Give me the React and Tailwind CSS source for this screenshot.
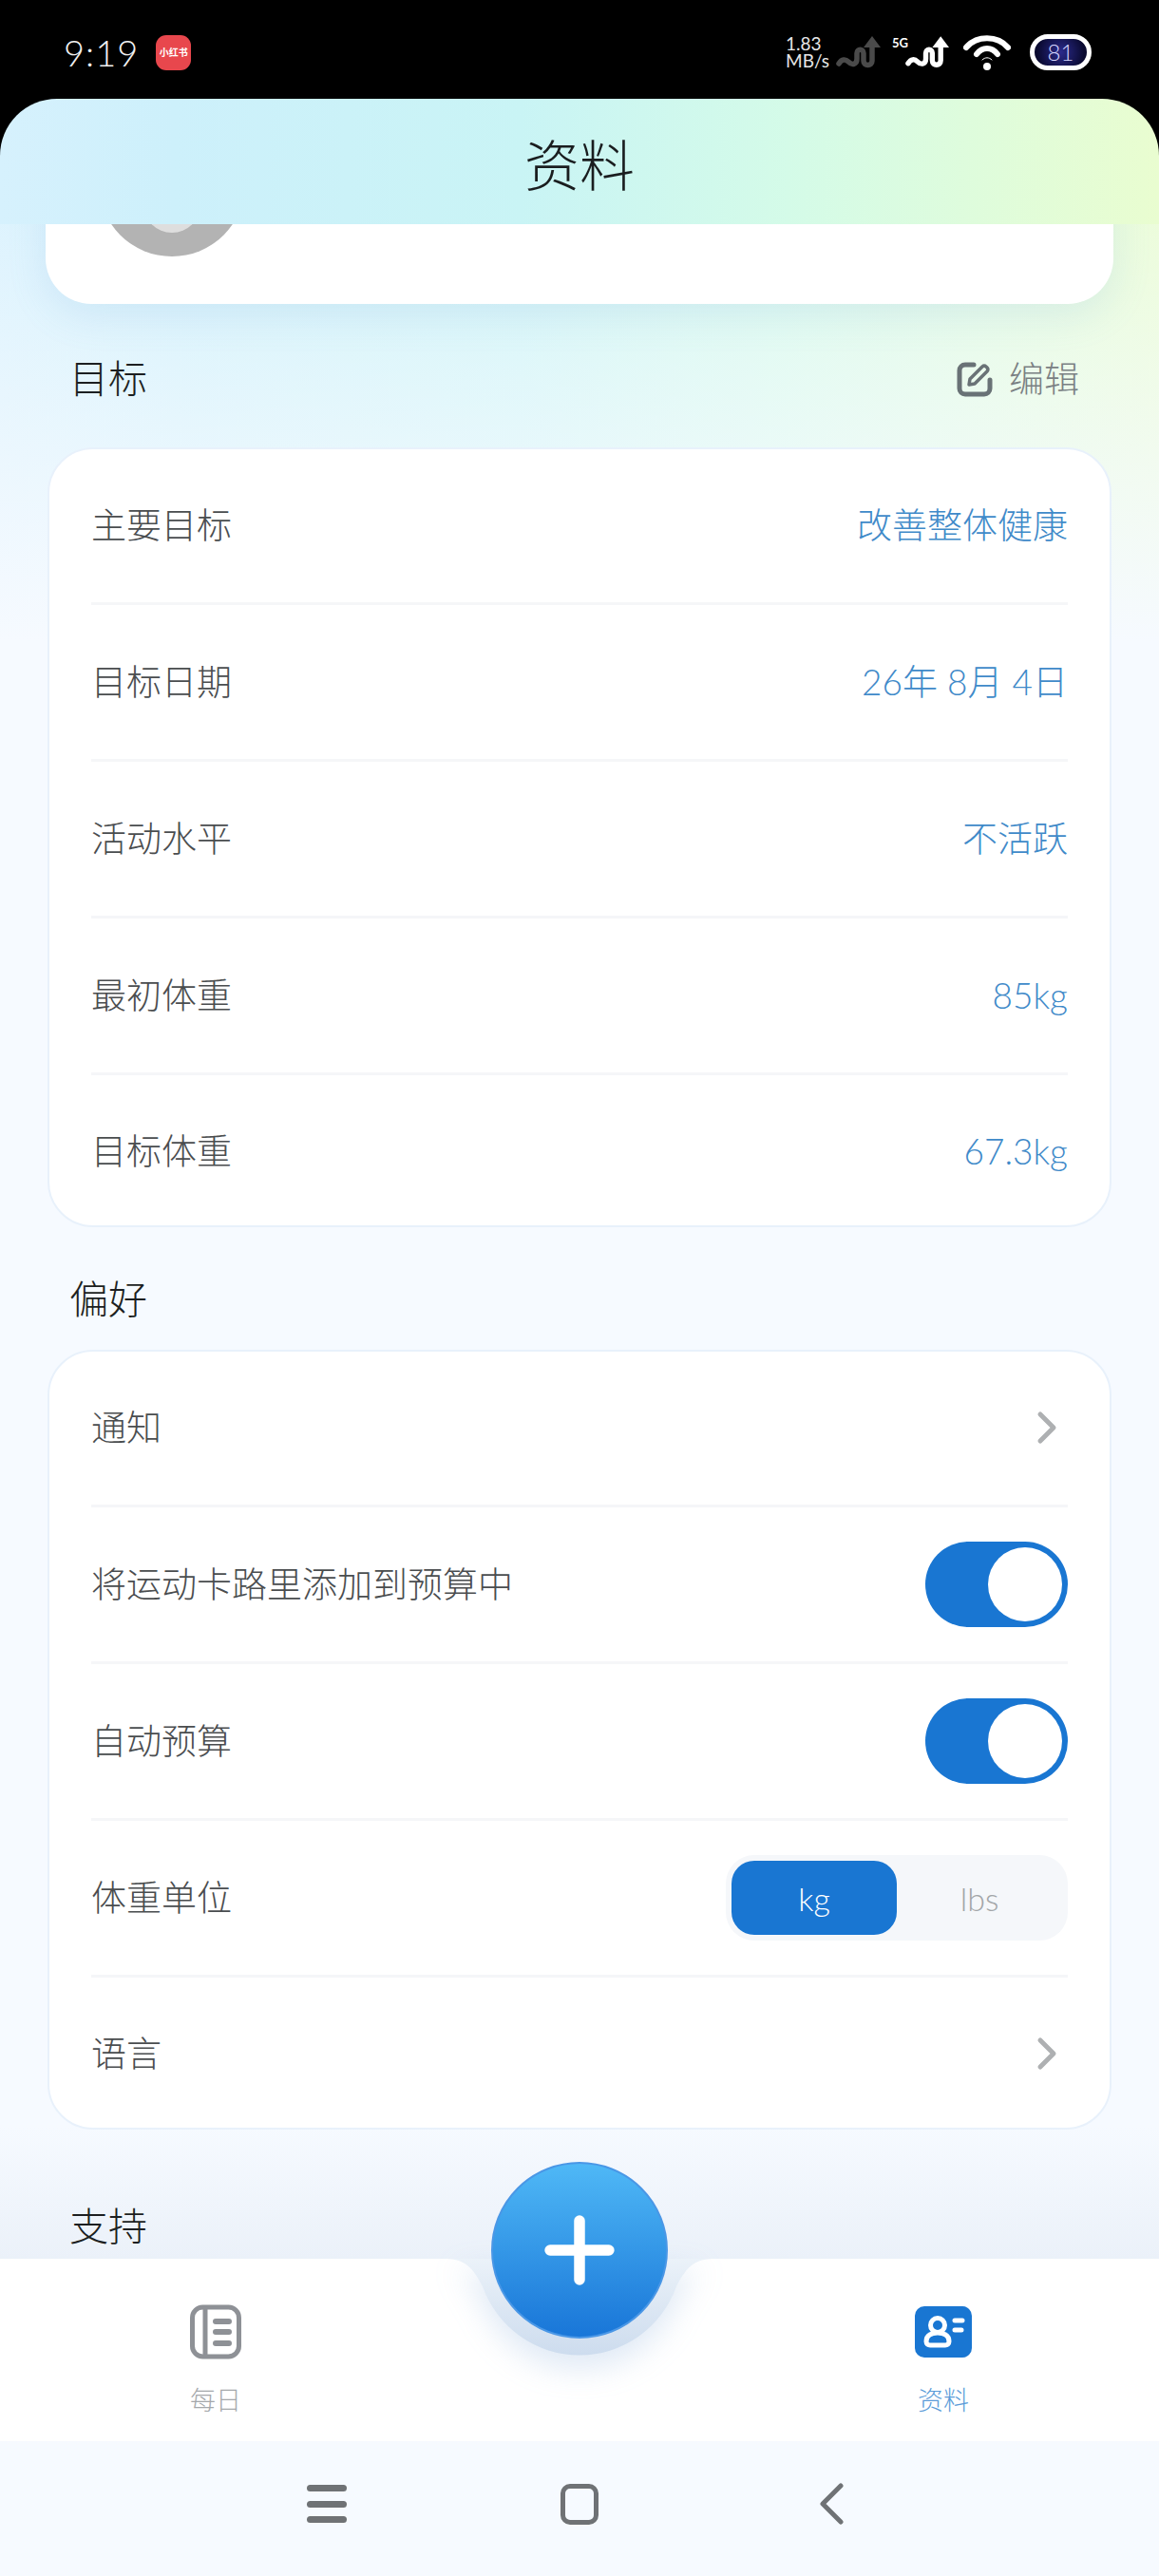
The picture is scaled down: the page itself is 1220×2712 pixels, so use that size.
import React from 'react';
import { Plus } from 'lucide-react';

const goalRows = [
  { label: '主要目标', value: '改善整体健康' },
  { label: '目标日期', value: '26年 8月 4日' },
  { label: '活动水平', value: '不活跃' },
  { label: '最初体重', value: '85kg' },
  { label: '目标体重', value: '67.3kg' },
];

const Squiggle = ({ color, className }) => (
  <svg viewBox="0 0 48 36" className={className} fill="none">
    <path
      d="M4 30c3-5 7-5 10-2 4 4 9 3 9-3v-6c0-5 7-5 7 0v8c0 6 9 6 9 0V12"
      stroke={color}
      strokeWidth="5.5"
      strokeLinecap="round"
      strokeLinejoin="round"
    />
    <path d="M39 1l9 12H30z" fill={color} />
  </svg>
);

const StatusBar = () => (
  <div className="flex h-[104px] shrink-0 items-center justify-between pl-[67px] pr-[71px] pt-[6px]">
    <div className="flex items-center gap-[18px]">
      <span className="text-[38px] font-light leading-none tracking-[1px] text-[#f0f0f0]">9:19</span>
      <div className="flex h-[37px] w-[37px] items-center justify-center rounded-[11px] bg-[#e8474d] text-[10px] font-bold text-white">
        小红书
      </div>
    </div>
    <div className="flex items-center">
      <div className="flex w-[52px] flex-col text-[19px] leading-[18px] text-[#e6e6e6]">
        <span>1.83</span>
        <span>MB/s</span>
      </div>
      <Squiggle color="#4a4a4a" className="h-[36px] w-[48px]" />
      <div className="relative ml-[12px] h-[36px] w-[60px]">
        <span className="absolute left-0 top-[2px] text-[13px] font-bold leading-none text-white">5G</span>
        <Squiggle color="#ffffff" className="absolute bottom-0 right-0 h-[36px] w-[47px]" />
      </div>
      <svg viewBox="0 0 50 38" className="ml-[15px] h-[38px] w-[50px]" fill="none">
        <path d="M3 14C14 1 36 1 47 14" stroke="#fff" strokeWidth="6" strokeLinecap="round" />
        <path d="M14 21C20 13 30 13 36 21" stroke="#fff" strokeWidth="6" strokeLinecap="round" />
        <path d="M20 27C23 24 27 24 30 27" stroke="#fff" strokeWidth="1" strokeLinecap="round" />
        <circle cx="25" cy="34" r="4" fill="#fff" />
      </svg>
      <div className="ml-[20px] flex h-[38px] w-[65px] items-center justify-center rounded-full border-[5px] border-white bg-[radial-gradient(circle,#2b2a8c_0%,#0a0a30_80%)] text-[24px] font-light leading-none text-[#d6d7ff]">
        81
      </div>
    </div>
  </div>
);

const Divider = () => <div className="mx-[44px] my-px h-[3px] bg-[#f5f6f8]" />;

const Row = ({ label, children }) => (
  <div className="flex h-[160px] items-center justify-between px-[44px] last:h-[157px]">
    <span className="text-[37px] font-light text-[#4a4d4f]">{label}</span>
    {children}
  </div>
);

const Chevron = () => (
  <svg viewBox="0 0 24 36" className="mr-[10px] h-[36px] w-[24px]" fill="none">
    <path d="M5 4l14 14L5 32" stroke="#aeb0b2" strokeWidth="5" strokeLinecap="round" strokeLinejoin="round" />
  </svg>
);

const Toggle = () => (
  <div className="flex h-[90px] w-[150px] items-center justify-end rounded-full bg-[#1976d2] pr-[6px]">
    <div className="h-[78px] w-[78px] rounded-full bg-white" />
  </div>
);

const UnitSwitch = () => (
  <div className="flex h-[90px] w-[360px] rounded-[30px] bg-[#f5f7fa] p-[6px] text-[34px] font-light">
    <div className="flex w-[174px] items-center justify-center rounded-[24px] bg-[#1976d2] text-white">kg</div>
    <div className="flex flex-1 items-center justify-center text-[#a2a5a8]">lbs</div>
  </div>
);

const Card = ({ children }) => (
  <div className="mx-[2px] rounded-[48px] border-2 border-[#e8f1fb] bg-white">{children}</div>
);

const Profile = () => (
  <div className="-mt-[136px] h-[220px] rounded-[48px] bg-white pl-[56px] pt-[16px] shadow-[0_12px_40px_rgba(110,170,215,0.16)]">
    <svg viewBox="0 0 154 154" className="h-[154px] w-[154px]">
      <circle cx="77" cy="77" r="77" fill="#b3b3b3" />
      <circle cx="77" cy="99" r="30" fill="#dedede" />
    </svg>
  </div>
);

const EditIcon = () => (
  <svg viewBox="0 0 38 38" className="h-[38px] w-[38px]" fill="none" stroke="#697276" strokeLinecap="round" strokeLinejoin="round">
    <path d="M18 4H9a6 6 0 0 0-6 6v19a6 6 0 0 0 6 6h20a6 6 0 0 0 6-6V20" strokeWidth="5" />
    <path d="M13 25l1-6L27 6a3 3 0 0 1 4 0l1 1a3 3 0 0 1 0 4L19 24z" strokeWidth="3.5" />
  </svg>
);

const DailyIcon = () => (
  <svg viewBox="0 0 54 58" className="h-[58px] w-[54px]" fill="none" stroke="#8e9196">
    <rect x="2.5" y="3" width="49" height="52" rx="11" strokeWidth="5" />
    <path d="M16 3v52" strokeWidth="5" />
    <path d="M27 18h14M27 29h14M27 41h14" strokeWidth="6" strokeLinecap="round" />
  </svg>
);

const ProfileIcon = () => (
  <svg viewBox="0 0 60 54" className="h-[54px] w-[60px]">
    <rect width="60" height="54" rx="10" fill="#1976d2" />
    <g fill="none" stroke="#fff" strokeWidth="5">
      <circle cx="24" cy="20" r="7.5" />
      <path d="M12 37c0-7 6-9 12-9s12 2 12 9c0 3-2 4-4 4H16c-2 0-4-1-4-4z" />
    </g>
    <path d="M42 15h8M42 25h7" stroke="#fff" strokeWidth="5" strokeLinecap="round" />
  </svg>
);

const NavItem = ({ icon, label, active }) => (
  <div className="flex h-[119px] w-[200px] flex-col items-center justify-between">
    <div className="flex h-[58px] items-center">{icon}</div>
    <span className={active ? 'text-[27px] font-light leading-[36px] text-[#5a9bd8]' : 'text-[27px] font-light leading-[36px] text-[#a5a8ab]'}>
      {label}
    </span>
  </div>
);

const BottomNav = () => (
  <div className="relative z-10 flex h-[192px] shrink-0 justify-between bg-white px-[127px] pt-[48px]">
    {/* notch behind the add button */}
    <svg viewBox="460 2378 300 110" className="absolute left-[460px] top-0 h-[110px] w-[300px] drop-shadow-[0_14px_16px_rgba(110,155,210,0.22)]">
      <defs>
        <linearGradient id="notch" x1="0" y1="0" x2="0" y2="1">
          <stop offset="0" stopColor="#ebf2f9" />
          <stop offset="1" stopColor="#cddcee" />
        </linearGradient>
      </defs>
      <path d="M470 2378C492 2378 500 2392 508 2407A108 108 0 0 0 712 2407C720 2392 728 2378 750 2378Z" fill="url(#notch)" />
    </svg>
    <NavItem icon={<DailyIcon />} label="每日" />
    <NavItem icon={<ProfileIcon />} label="资料" active />
    <div className="absolute left-[517px] top-[-102px] flex h-[186px] w-[186px] items-center justify-center rounded-full border-2 border-[#4a97e6] bg-[linear-gradient(to_bottom,#4fb8f6,#1976d8)]">
      <Plus size={106} color="#ffffff" strokeWidth={2.6} />
    </div>
  </div>
);

const SystemBar = () => (
  <div className="flex h-[142px] shrink-0 items-center bg-[#f6faff] pb-[10px] pl-[323px]">
    <div className="flex h-[40px] w-[42px] flex-col justify-between">
      <div className="h-[7px] rounded-full bg-[#6f7275]" />
      <div className="h-[7px] rounded-full bg-[#6f7275]" />
      <div className="h-[7px] rounded-full bg-[#6f7275]" />
    </div>
    <div className="ml-[225px] h-[43px] w-[40px] rounded-[10px] border-[5px] border-[#6f7275]" />
    <svg viewBox="0 0 26 44" className="ml-[232px] h-[44px] w-[26px]" fill="none">
      <path d="M23 3L4 22l19 19" stroke="#6f7275" strokeWidth="5" strokeLinecap="round" strokeLinejoin="round" />
    </svg>
  </div>
);

export default function App() {
  return (
    <div className="flex h-[2712px] w-[1220px] flex-col overflow-hidden bg-black font-[Lato,'Noto_Sans_CJK_SC',sans-serif]">
      <StatusBar />
      <div className="flex min-h-0 flex-1 flex-col overflow-hidden rounded-t-[60px]">
        <div className="relative z-10 flex h-[132px] shrink-0 items-center justify-center bg-[linear-gradient(to_right,#d6f1fd_0%,#cdf0fb_15%,#c9f4f5_45%,#d4fbe8_68%,#e9fdd0_100%)] pt-[6px] text-[58px] font-light text-[#1a1d1f]">
          资料
        </div>

        <div className="min-h-0 flex-1 overflow-hidden bg-[linear-gradient(to_bottom,transparent_calc(100%-140px),#ebf1f9_100%),linear-gradient(to_bottom,rgba(246,250,255,0.25)_0px,#f6faff_440px),linear-gradient(to_right,#d6f1fd_0%,#cdf0fb_15%,#c9f4f5_45%,#d4fbe8_68%,#e9fdd0_100%)] px-[48px]">
          <Profile />

          <div className="flex h-[151px] items-center justify-between pl-[25px] pr-[36px] pt-[6px]">
            <h2 className="text-[41px] font-light text-[#1c1f21]">目标</h2>
            <div className="flex items-center gap-[17px] text-[37px] font-light text-[#7a8083]">
              <EditIcon />
              <span>编辑</span>
            </div>
          </div>

          <Card>
            {goalRows.map((row, i) => (
              <React.Fragment key={row.label}>
                {i > 0 && <Divider />}
                <Row label={row.label}>
                  <span className="text-[37px] font-light text-[#3f8ac9]">{row.value}</span>
                </Row>
              </React.Fragment>
            ))}
          </Card>

          <div className="flex h-[129px] items-center pl-[25px] pt-[22px]">
            <h2 className="text-[41px] font-light text-[#1c1f21]">偏好</h2>
          </div>

          <Card>
            <Row label="通知"><Chevron /></Row>
            <Divider />
            <Row label="将运动卡路里添加到预算中"><Toggle /></Row>
            <Divider />
            <Row label="自动预算"><Toggle /></Row>
            <Divider />
            <Row label="体重单位"><UnitSwitch /></Row>
            <Divider />
            <Row label="语言"><Chevron /></Row>
          </Card>

          <div className="flex h-[133px] items-center pl-[25px] pt-[70px]">
            <h2 className="text-[41px] font-light text-[#1c1f21]">支持</h2>
          </div>
        </div>

        <BottomNav />
        <SystemBar />
      </div>
    </div>
  );
}
